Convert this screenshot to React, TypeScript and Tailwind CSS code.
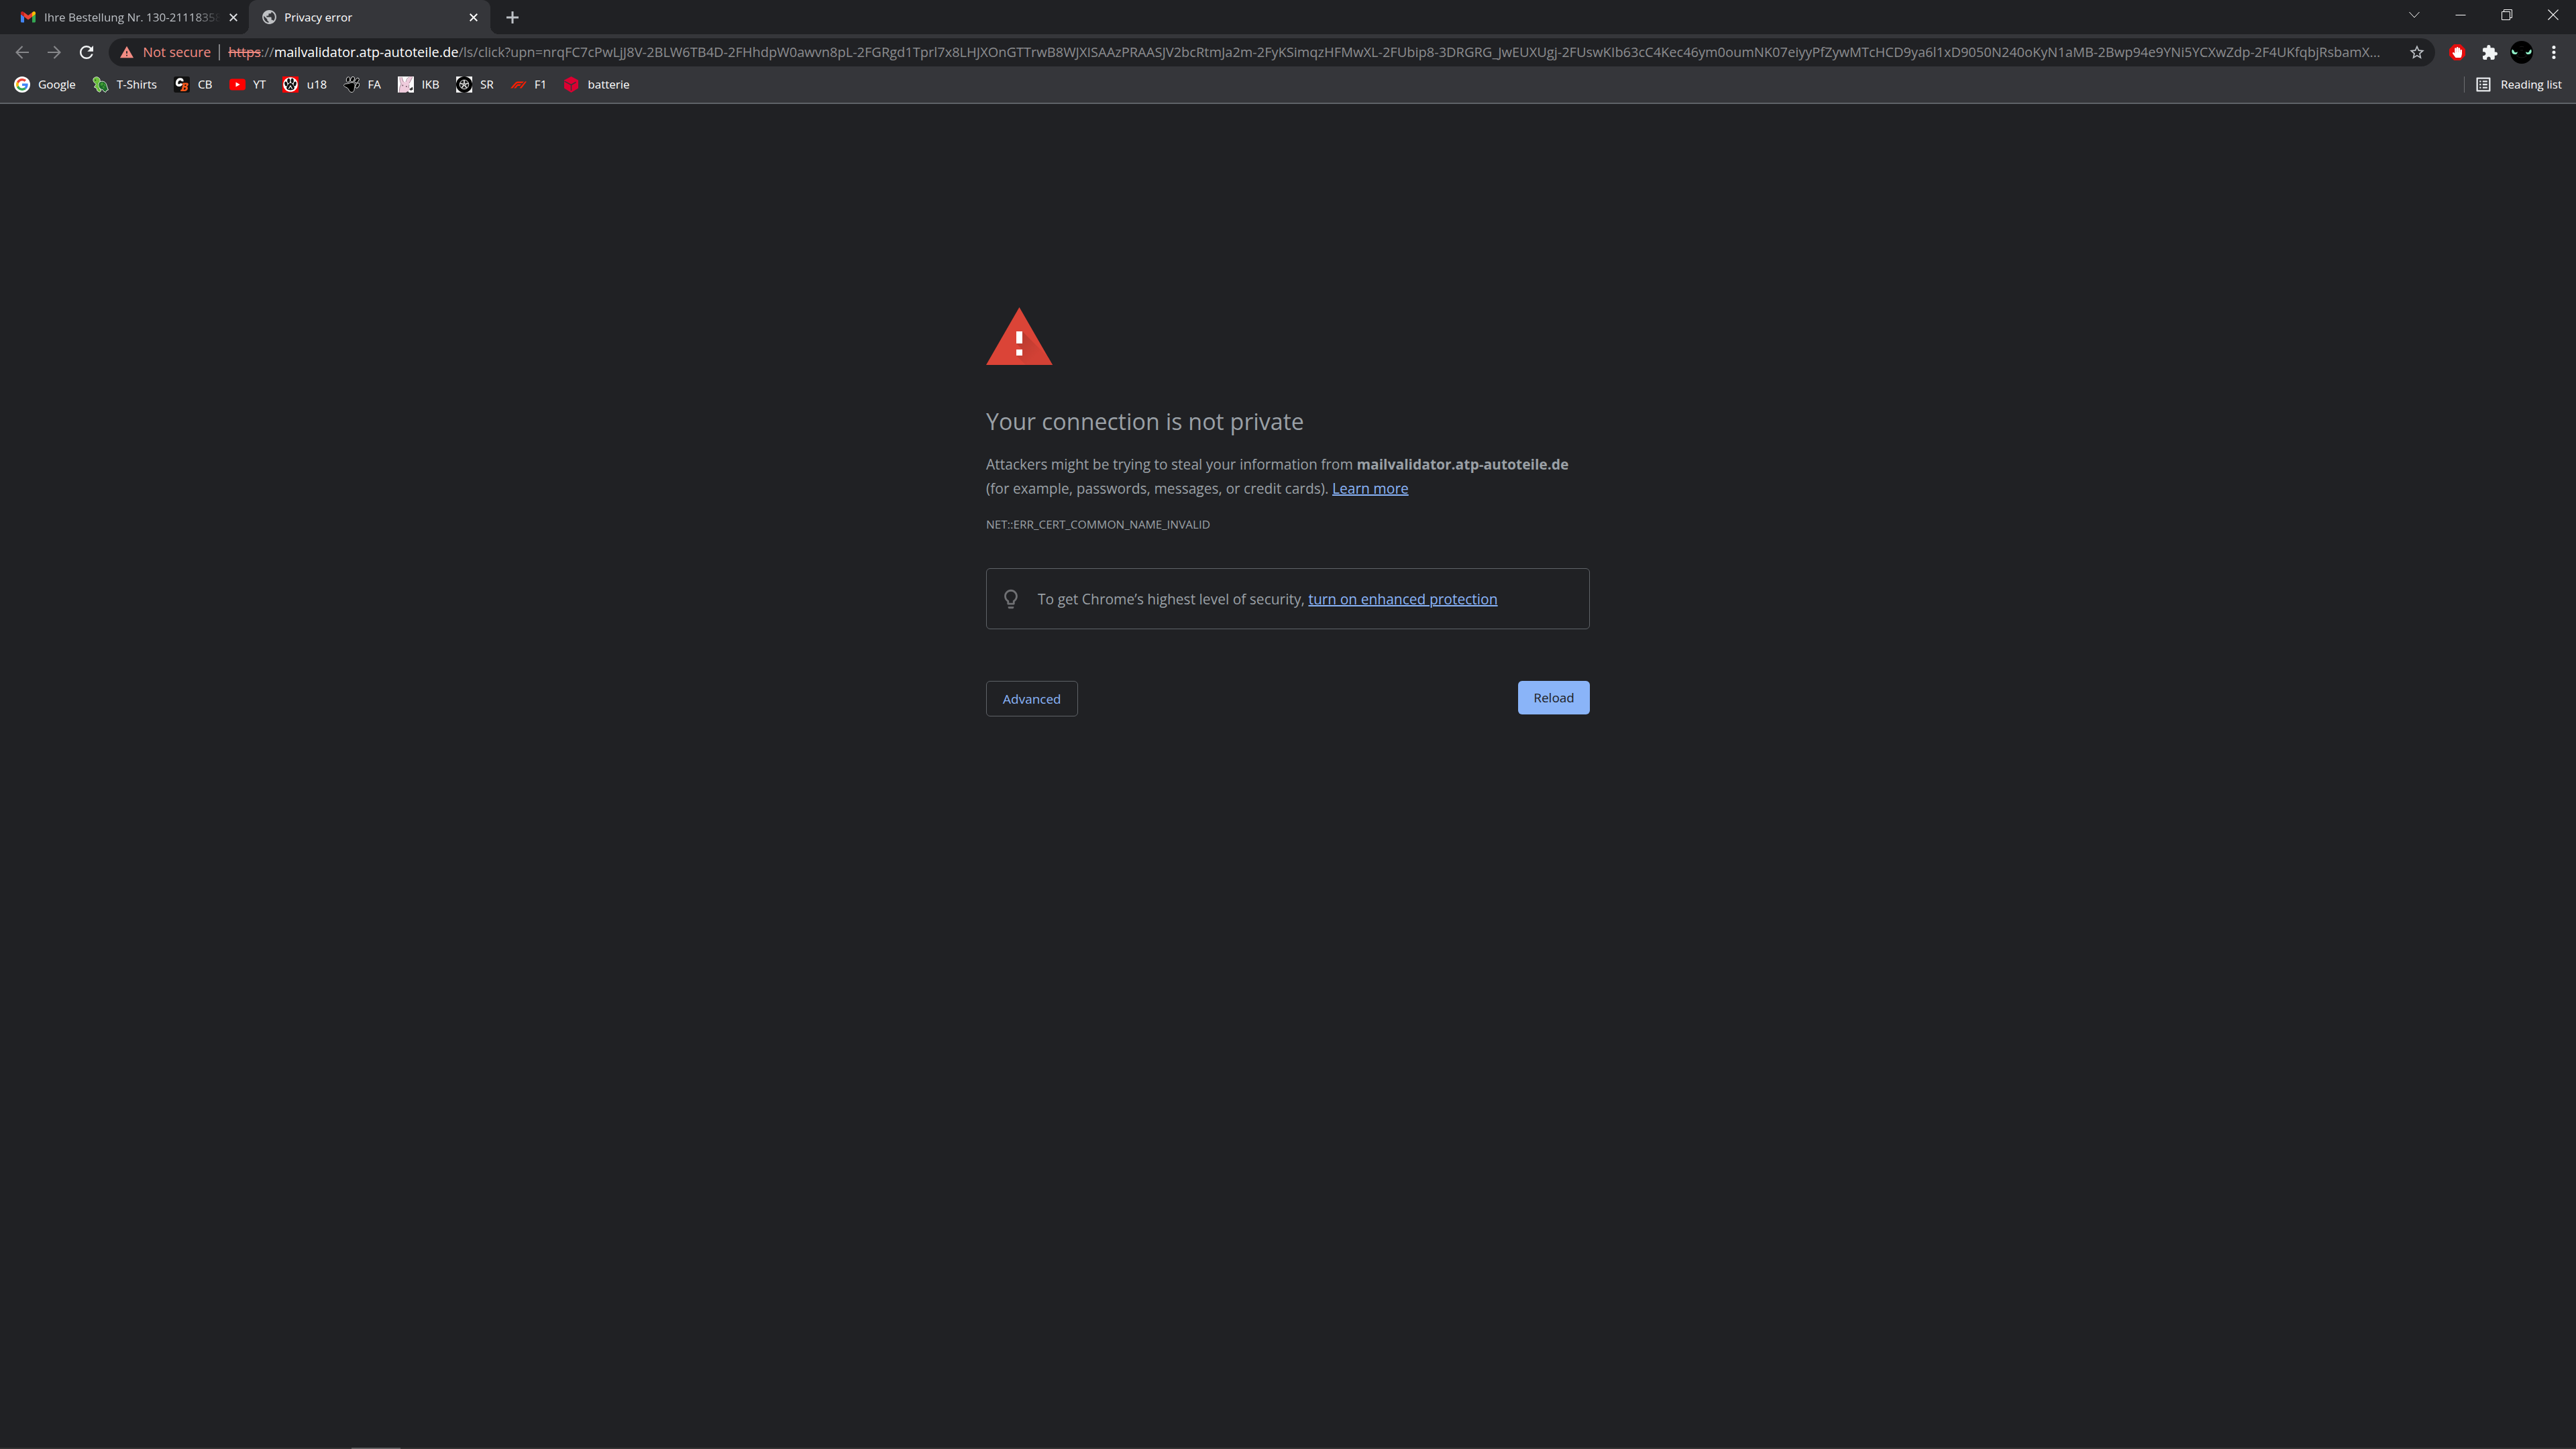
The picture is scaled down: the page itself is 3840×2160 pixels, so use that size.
import type { ReactNode } from "react";
import { FaHandPaper } from "react-icons/fa";
import {
  MdExtension,
  MdListAlt,
  MdOutlineLightbulb,
  MdPublic,
  MdRefresh,
  MdStarBorder,
  MdWarning,
} from "react-icons/md";

const URL_PATH =
  "/ls/click?upn=nrqFC7cPwLjJ8V-2BLW6TB4D-2FHhdpW0awvn8pL-2FGRgd1Tprl7x8LHJXOnGTTrwB8WJXISAAzPRAASJV2bcRtmJa2m-2FyKSimqzHFMwXL-2FUbip8-3DRGRG_JwEUXUgj-2FUswKIb63cC4Kec46ym0oumNK07eiyyPfZywMTcHCD9ya6l1xD9050N240oKyN1aMB-2Bwp94e9YNi5YCXwZdp-2F4UKfqbjRsbamX...";

function GmailIcon() {
  return (
    <svg viewBox="52 42 88 66" className="w-[22px] shrink-0">
      <path fill="#4285f4" d="M58 108h14V74L52 59v43c0 3.32 2.69 6 6 6" />
      <path fill="#34a853" d="M120 108h14c3.32 0 6-2.69 6-6V59l-20 15" />
      <path fill="#fbbc04" d="M120 48v26l20-15v-8c0-7.42-8.47-11.65-14.4-7.2" />
      <path fill="#ea4335" d="M72 74V48l24 18 24-18v26L96 92" />
      <path fill="#c5221f" d="M52 51v8l20 15V48l-5.6-4.2c-5.94-4.45-14.4-.22-14.4 7.2" />
    </svg>
  );
}

function CloseGlyph() {
  return (
    <svg viewBox="0 0 12 12" className="size-3" fill="none" stroke="currentColor" strokeWidth="2">
      <path d="M.7.7 11.3 11.3M11.3.7.7 11.3" />
    </svg>
  );
}

function GoogleIcon() {
  return (
    <svg viewBox="0 0 24 24" className="size-6">
      <circle cx="12" cy="12" r="12" fill="#fff" />
      <g transform="translate(3 3) scale(.375)">
        <path fill="#ea4335" d="M24 9.5c3.54 0 6.71 1.22 9.21 3.6l6.85-6.85C35.9 2.38 30.47 0 24 0 14.62 0 6.51 5.38 2.56 13.22l7.98 6.19C12.43 13.72 17.74 9.5 24 9.5z" />
        <path fill="#4285f4" d="M46.98 24.55c0-1.57-.15-3.09-.38-4.55H24v9.02h12.94c-.58 2.96-2.26 5.48-4.78 7.18l7.73 6c4.51-4.18 7.09-10.36 7.09-17.65z" />
        <path fill="#fbbc05" d="M10.53 28.59c-.48-1.45-.76-2.99-.76-4.59s.27-3.14.76-4.59l-7.98-6.19C.92 16.46 0 20.12 0 24s.92 7.54 2.56 10.78l7.97-6.19z" />
        <path fill="#34a853" d="M24 48c6.48 0 11.93-2.13 15.89-5.81l-7.73-6c-2.15 1.45-4.92 2.3-8.16 2.3-6.26 0-11.57-4.22-13.47-9.91l-7.98 6.19C6.51 42.62 14.62 48 24 48z" />
      </g>
    </svg>
  );
}

function TurtleIcon() {
  return (
    <svg viewBox="0 0 24 24" className="size-6">
      <g stroke="#e8efe6" strokeWidth="1" strokeLinejoin="round">
        <path fill="#5cb531" d="M1.500 3C3.500.2 8 0 10.200 3c1.400 2 1 4 .5 5.500L10.500 18l2.500 3-2.500 2.300-3.500-2L6 17.500 2.500 16l3-4.700C2 9.500-.2 6 1.500 3z" />
        <path fill="#1c6b2a" d="M9 10c3-4.500 9.500-3.500 11.500 1.500 1 3 1.500 6 3 8.500l-2.500.7L19.500 23.500l-3-1.500-1.500-2.500C11 19.500 8 16 9 10z" />
      </g>
      <path fill="#6fc23d" d="M2 4C4 1 8 .8 9.500 3.500c1.500 2.500.3 5.500-2 6C4 10 .8 7.500 2 4zM6 11l2.500 1-.5 6 3 3.300-1 1-3-1.500L6.800 16 4 15z" />
      <path fill="#3f9b35" d="m12 10 3-1.500 1.500 3L14 14l-2.500-1zM17.500 10l2 2.500-.5 3-2-2.500zM14.500 15.500l2-1.500 1.500 3-1.500 1z" />
      <circle cx="4.300" cy="5.500" r=".9" fill="#17351a" />
    </svg>
  );
}

function CbIcon() {
  return (
    <svg viewBox="0 0 24 24" className="size-6">
      <rect width="24" height="24" rx="3" fill="#111" />
      <path fill="none" stroke="#fff" strokeWidth="3.400" d="M12.800 7.200c.4-2.300-.9-3.200-2.900-3.200-3 0-4.600 1.800-5.200 4.600-.6 2.900.4 4.600 3 4.600 2 0 3.500-.9 4-2.700" />
      <path fill="#f4581c" fillRule="evenodd" d="M13.500 9.500h5.800c2 0 2.900 1.200 2.400 3-.3 1.300-1 2-2.100 2.500 1.300.5 1.700 1.500 1.300 3.200-.6 2.500-2.200 3.800-4.700 3.800H10l.6-2.500h1.200l1.800-7.500h-.9zm3.100 2.500-.5 2h1.300c1.500 0 1.900-2 .5-2zm-1.100 4.400-.7 3h1.500c1.700 0 2.200-3 .5-3z" />
    </svg>
  );
}

function YoutubeIcon() {
  return (
    <svg viewBox="0 0 24 24" className="size-6">
      <rect y="3.500" width="24" height="17" rx="4" fill="#f00" />
      <path d="M9.500 8.500v7l6.200-3.500z" fill="#fff" />
    </svg>
  );
}

function RedPawIcon() {
  return (
    <svg viewBox="0 0 24 24" className="size-6">
      <rect width="24" height="24" fill="#f00" />
      <circle cx="12" cy="12" r="10.800" fill="#fff" />
      <g fill="#111">
        <ellipse cx="9.300" cy="6.300" rx="2.100" ry="3.600" />
        <ellipse cx="14.700" cy="6.300" rx="2.100" ry="3.600" />
        <ellipse cx="5.300" cy="11" rx="2" ry="3.500" transform="rotate(-12 5.300 11)" />
        <ellipse cx="18.700" cy="11" rx="2" ry="3.500" transform="rotate(12 18.700 11)" />
        <path d="M12 9.800c2.800 0 3.600 2.800 5.200 5 1.500 2 .3 5-2.200 5.200l-3 .6-3-.6c-2.500-.2-3.700-3.200-2.200-5.200 1.600-2.200 2.400-5 5.200-5z" />
      </g>
      <path d="m9.300 18.500 2.700-4.500 2.700 4.500" fill="none" stroke="#fff" strokeWidth="1.200" />
    </svg>
  );
}

function BlackPawIcon() {
  return (
    <svg viewBox="0 0 24 24" className="size-6">
      <g fill="#000" stroke="#e4e4e4" strokeWidth=".9">
        <ellipse cx="7" cy="4.600" rx="2.700" ry="4" transform="rotate(12 7 4.600)" />
        <ellipse cx="13.500" cy="4.300" rx="2.600" ry="4" transform="rotate(22 13.500 4.300)" />
        <ellipse cx="20" cy="6" rx="2.400" ry="4.300" transform="rotate(38 20 6)" />
        <ellipse cx="20.800" cy="13.500" rx="2.300" ry="4" transform="rotate(30 20.800 13.500)" />
        <path d="M.7 12.500c1-2.500 5-1 8.300-2.500 3-1.400 6.500-1.500 7.800 1.300 1 2.400-.3 4.200-.5 6.500-.2 2.800-.8 5.700-4.300 5.700-3.200 0-3.400-3-5-5.200C5.200 15.800-.5 15.500.7 12.500z" />
      </g>
    </svg>
  );
}

function RabbitIcon() {
  return (
    <svg viewBox="0 0 24 24" className="size-6">
      <rect width="24" height="24" fill="#fdfbfc" />
      <path fill="#efcbdc" d="M3 1h3l3 7 3 .5L18 0h4l-4 9-2 4 2 5-3 6H2l1-8 2-5z" />
      <path fill="none" stroke="#8f7482" strokeWidth=".8" d="M3 1c0 4 .5 7 2 10M6 1c1 3 1 6 3 7.500M22 1l-5 9M12 8l2-5 3-2M2 24l1-8 2-5M17 12l-1 5" />
      <path fill="#6a5560" d="M6.500 12.500h1.600v1.700H6.500zM12 14h1.600v1.700H12z" />
      <path fill="#333" d="m17 19 5-3.500.5 4-3 1.500zM12 24l3-2 2 2z" />
    </svg>
  );
}

function WheelIcon() {
  return (
    <svg viewBox="0 0 24 24" className="size-6">
      <rect width="24" height="24" fill="#eee" />
      <circle cx="12" cy="12" r="12" fill="#000" />
      <circle cx="12" cy="12" r="6.800" fill="#222" stroke="#e6e6e6" strokeWidth="1" />
      <path stroke="#e6e6e6" strokeWidth="1.700" d="M12 12V5.500M12 12l6.200-2M12 12l3.800 5.300M12 12l-3.800 5.300M12 12l-6.200-2" />
      <circle cx="12" cy="12" r="2" fill="#ddd" />
      <circle cx="12" cy="12" r=".8" fill="#222" />
    </svg>
  );
}

function F1Icon() {
  return (
    <svg viewBox="0 0 24 24" className="size-6" fill="#ff1e00">
      <path d="M0 17.500 6.500 10c1.700-1.900 3-2.500 5.500-2.500h8L17.500 10h-6.300c-1.200 0-1.900.3-2.700 1.200L3 17.500z" />
      <path d="M5 17.500 8.700 13c.8-1 1.500-1.400 3-1.400h4.300l-2 2.400h-3.300L8 17.500zM13.500 17.500l8.200-10H24l-7.500 10z" />
    </svg>
  );
}

function ParcelIcon() {
  return (
    <svg viewBox="0 0 24 24" className="size-6">
      <path fill="#dc0032" d="M11.500 0 22 5.500v12L11.500 24 1 17.500v-12z" />
      <path fill="none" stroke="#35363a" strokeWidth="1.500" d="m1.500 7.200 10 5.300V21M11.500 12.500l7-4" />
    </svg>
  );
}

const BOOKMARKS: { label: string; icon: ReactNode }[] = [
  { label: "Google", icon: <GoogleIcon /> },
  { label: "T-Shirts", icon: <TurtleIcon /> },
  { label: "CB", icon: <CbIcon /> },
  { label: "YT", icon: <YoutubeIcon /> },
  { label: "u18", icon: <RedPawIcon /> },
  { label: "FA", icon: <BlackPawIcon /> },
  { label: "IKB", icon: <RabbitIcon /> },
  { label: "SR", icon: <WheelIcon /> },
  { label: "F1", icon: <F1Icon /> },
  { label: "batterie", icon: <ParcelIcon /> },
];

function TabStrip() {
  return (
    <div className="flex h-[51px] bg-[#202124]">
      <div role="tablist" aria-label="Open tabs" className="flex">
        <div className="flex w-[371px] items-center pr-4 pl-[31px]">
          <GmailIcon />
          <button
            role="tab"
            aria-selected="false"
            className="ml-[13px] min-w-0 flex-1 overflow-hidden text-left whitespace-nowrap text-[#bdc1c6] [mask-image:linear-gradient(to_right,black_85%,transparent)]"
          >
            Ihre Bestellung Nr. 130-21118358
          </button>
          <button aria-label="Close tab" className="ml-3 p-[1px] text-[#dadce0]">
            <CloseGlyph />
          </button>
        </div>
        <div className="relative flex w-[360px] items-center rounded-t-xl bg-[#35363a] pr-[18px] pl-[18px] text-white">
          <span className="absolute bottom-0 -left-3 size-3 bg-[radial-gradient(circle_at_0_0,#202124_12px,#35363a_12px)]" />
          <span className="absolute -right-3 bottom-0 size-3 bg-[radial-gradient(circle_at_100%_0,#202124_12px,#35363a_12px)]" />
          <MdPublic className="size-[25px] shrink-0 text-[#bfc1c4]" />
          <button role="tab" aria-selected="true" className="ml-[10px] flex-1 text-left">
            Privacy error
          </button>
          <button aria-label="Close tab" className="p-[1px]">
            <CloseGlyph />
          </button>
        </div>
      </div>
      <button aria-label="New tab" className="ml-[15px] grid w-9 place-items-center text-[#bdc1c6]">
        <svg viewBox="0 0 18 18" className="size-[18px]" stroke="currentColor" strokeWidth="3">
          <path d="M9 0v18M0 9h18" />
        </svg>
      </button>
      <div className="ml-auto flex h-[43px] text-white">
        <button aria-label="Search tabs" className="grid w-[69px] place-items-center">
          <svg viewBox="0 0 16 16" className="size-4" fill="none" stroke="currentColor">
            <path d="m.5 4 7.500 8 7.500-8" />
          </svg>
        </button>
        <button aria-label="Minimize" className="grid w-[69px] place-items-center">
          <svg viewBox="0 0 16 16" className="size-4" fill="none" stroke="currentColor">
            <path d="M.5 8.500h15" />
          </svg>
        </button>
        <button aria-label="Restore" className="grid w-[69px] place-items-center">
          <svg viewBox="0 0 16 16" className="size-4" fill="none" stroke="currentColor">
            <path d="M.5 3.500h12v12H.5zM3.500 3.500v-3h12v12h-3" />
          </svg>
        </button>
        <button aria-label="Close window" className="grid w-[69px] place-items-center">
          <svg viewBox="0 0 16 16" className="size-4" fill="none" stroke="currentColor" strokeWidth="1.200">
            <path d="m.5.5 15 15M15.500.5l-15 15" />
          </svg>
        </button>
      </div>
    </div>
  );
}

function ArrowIcon({ forward = false }: { forward?: boolean }) {
  return (
    <svg viewBox="0 0 20 20" className="size-5" fill="none" stroke="currentColor" strokeWidth="2.200">
      {forward ? <path d="M0 10h18M9.500 1l9 9-9 9" /> : <path d="M20 10H2M10.500 1l-9 9 9 9" />}
    </svg>
  );
}

function AddressBar() {
  return (
    <div className="ml-[9px] flex h-[42px] min-w-0 flex-1 items-center rounded-full bg-[#202124] pr-[14px] pl-4 text-[20px]">
      <button className="flex shrink-0 items-center gap-[13px] text-[#f28b82]">
        <MdWarning className="size-[22px]" />
        Not secure
      </button>
      <span className="mx-3 h-6 w-[2px] shrink-0 bg-[#808184]" />
      <div
        role="textbox"
        aria-label="Address and search bar"
        tabIndex={0}
        className="min-w-0 flex-1 truncate text-[#8b8c8f]"
      >
        <span className="text-[#f28b82] line-through decoration-2">https</span>://
        <span className="text-white">mailvalidator.atp-autoteile.de</span>
        {URL_PATH}
      </div>
      <button aria-label="Bookmark this tab" className="ml-4 shrink-0 text-[#bdc1c6]">
        <MdStarBorder className="size-[26px]" />
      </button>
    </div>
  );
}

function Avatar() {
  return (
    <svg viewBox="0 0 34 34" className="size-[34px]">
      <circle cx="17" cy="17" r="17" fill="#000" />
      <path fill="none" stroke="#1c1c1c" d="M14 9c2-1 4-1 6 0M15 14h4M9 22c5 4 11 4 16 0M13 19l-3 4M21 19l3 4" />
      <g fill="#8ff0c8">
        <path d="M3 12.500c-2 4 .5 8 4.500 7.500 3 0 3.500-2.500 3-4-1.500 2-5 1.500-5-1.500z" />
        <path d="M31 12.500c2 4-.5 8-4.500 7.500-3 0-3.500-2.500-3-4 1.500 2 5 1.500 5-1.500z" />
      </g>
    </svg>
  );
}

function Toolbar() {
  return (
    <div className="flex h-[54px] items-center bg-[#35363a] pl-[9px]">
      <button aria-label="Back" className="grid size-12 place-items-center text-[#86878a]">
        <ArrowIcon />
      </button>
      <button aria-label="Forward" className="grid size-12 place-items-center text-[#86878a]">
        <ArrowIcon forward />
      </button>
      <button aria-label="Reload page" className="grid size-12 place-items-center text-[#f1f3f4]">
        <MdRefresh className="size-[30px]" />
      </button>
      <AddressBar />
      <div className="ml-[9px] flex items-center">
        <button aria-label="Ad blocker" className="grid size-12 place-items-center">
          <span className="grid size-6 place-items-center bg-[#e40d0d] text-[16px] text-white [clip-path:polygon(30%_0,70%_0,100%_30%,100%_70%,70%_100%,30%_100%,0_70%,0_30%)]">
            <FaHandPaper />
          </span>
        </button>
        <button aria-label="Extensions" className="grid size-12 place-items-center text-[#f1f3f4]">
          <MdExtension className="size-[25px]" />
        </button>
        <button aria-label="Profile" className="grid size-12 place-items-center">
          <Avatar />
        </button>
        <button aria-label="Menu" className="mr-[9px] grid size-12 place-items-center">
          <svg viewBox="0 0 6 20" className="h-5 w-[6px]" fill="#f1f3f4">
            <circle cx="3" cy="2.500" r="2.500" />
            <circle cx="3" cy="10" r="2.500" />
            <circle cx="3" cy="17.500" r="2.500" />
          </svg>
        </button>
      </div>
    </div>
  );
}

function BookmarksBar() {
  return (
    <nav
      aria-label="Bookmarks"
      className="flex h-[50px] items-center border-b-2 border-[#5f6368] bg-[#35363a] px-[21px] pb-[6px] text-white"
    >
      <ul className="flex items-center gap-[25px]">
        {BOOKMARKS.map(({ label, icon }) => (
          <li key={label}>
            <a href="#" className="flex items-center gap-3">
              {icon}
              {label}
            </a>
          </li>
        ))}
      </ul>
      <button className="ml-auto flex items-center gap-3">
        <span className="mr-[2px] h-6 w-[1px] bg-[#6d6e71]" />
        <MdListAlt className="size-7 text-[#e8eaed]" />
        Reading list
      </button>
    </nav>
  );
}

function WarningTriangle() {
  return (
    <svg viewBox="0 0 99 86" className="h-[86px] w-[99px]">
      <defs>
        <linearGradient id="shade" gradientUnits="userSpaceOnUse" x1="50" y1="44" x2="76" y2="70">
          <stop offset="0" stopColor="#b93a2f" />
          <stop offset="1" stopColor="#d24135" />
        </linearGradient>
        <clipPath id="tri">
          <path d="M49.500 0 99 86H0z" />
        </clipPath>
      </defs>
      <path fill="#db4437" d="M49.500 0 99 86H0z" />
      <g clipPath="url(#tri)" fill="url(#shade)">
        <path d="m54 36 50 50H59L45 72h9v-9l-9-9h9z" />
      </g>
      <path fill="#fff" d="M45 36h9v18h-9zM45 63h9v9h-9z" />
    </svg>
  );
}

function Interstitial() {
  return (
    <main className="mx-auto w-full max-w-[900px] flex-1 pt-[303px] text-[21px] leading-9 text-[#9aa0a6]">
      <WarningTriangle />
      <h1 className="mt-[60px] text-[34px] leading-[48px]">Your connection is not private</h1>
      <p className="mt-[22px]">
        Attackers might be trying to steal your information from <strong>mailvalidator.atp-autoteile.de</strong>
        <br />
        (for example, passwords, messages, or credit cards).{" "}
        <a href="#" className="text-[#8ab4f8] underline decoration-2">
          Learn more
        </a>
      </p>
      <p className="mt-[18px] text-[17px]">NET::ERR_CERT_COMMON_NAME_INVALID</p>
      <div className="mt-[47px] flex h-[91px] items-center rounded-md border border-[#5f6368] pl-[19px]">
        <MdOutlineLightbulb className="size-[34px] shrink-0 text-[#6f7073]" />
        <p className="ml-[23px]">
          To get Chrome’s highest level of security,{" "}
          <a href="#" className="text-[#8ab4f8] underline decoration-2">
            turn on enhanced protection
          </a>
        </p>
      </div>
      <div className="mt-[77px] flex items-start justify-between text-[19px]">
        <button className="h-[53px] rounded-md border border-[#5f6368] px-6 text-[#8ab4f8]">Advanced</button>
        <button className="h-[50px] rounded-md bg-[#8ab4f8] px-[23px] text-[#202124]">Reload</button>
      </div>
    </main>
  );
}

export default function App() {
  return (
    <div className="flex min-h-screen flex-col bg-[#202124] font-['Open_Sans',sans-serif] text-[17px]">
      <TabStrip />
      <Toolbar />
      <BookmarksBar />
      <Interstitial />
      <footer className="h-[2px] bg-[#333333] pl-[524px]">
        <div className="h-[2px] w-[73px] bg-[#606060]" />
      </footer>
    </div>
  );
}
